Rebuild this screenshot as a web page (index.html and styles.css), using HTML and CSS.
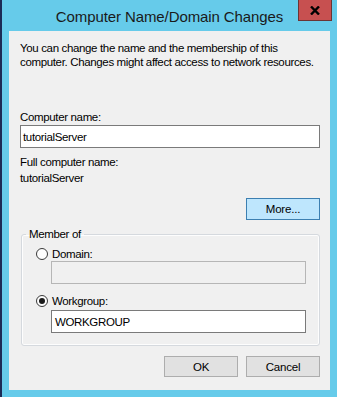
FILE: index.html
```html
<!DOCTYPE html>
<html lang="en">
<head>
<meta charset="utf-8">
<title>Computer Name/Domain Changes</title>
<link rel="stylesheet" href="styles.css">
</head>
<body>
<div class="screen">
  <div class="edge"></div>
  <div class="window">
    <div class="titlebar">
      <span class="title">Computer Name/Domain Changes</span>
      <div class="close">
        <svg width="10" height="9" viewBox="0 0 10 9"><path d="M1 0.5 L9 8.5 M9 0.5 L1 8.5" stroke="#000" stroke-width="2.4" fill="none"/></svg>
      </div>
    </div>
    <div class="client">
      <p class="intro">You can change the name and the membership of this<br>computer. Changes might affect access to network resources.</p>
      <div class="lbl name-lbl">Computer name:</div>
      <div class="textbox wide">tutorialServer</div>
      <div class="lbl full-lbl">Full computer name:</div>
      <div class="lbl full-val">tutorialServer</div>
      <div class="more-row"><div class="btn focus">More...</div></div>
      <fieldset class="group">
        <legend>Member of</legend>
        <div class="group-body">
          <div class="radio-row first"><span class="radio"></span><span>Domain:</span></div>
          <div class="textbox inner disabled"></div>
          <div class="radio-row second"><span class="radio checked"></span><span>Workgroup:</span></div>
          <div class="textbox inner wg">WORKGROUP</div>
        </div>
      </fieldset>
      <div class="actions">
        <div class="btn">OK</div>
        <div class="btn">Cancel</div>
      </div>
    </div>
  </div>
</div>
</body>
</html>
```
FILE: styles.css
```css
html, body {
  margin: 0;
  padding: 0;
}
body {
  width: 337px;
  height: 397px;
  overflow: hidden;
  font-family: "Liberation Sans", Arial, sans-serif;
  font-size: 12px;
  color: #000;
}
.screen {
  display: flex;
  width: 337px;
  height: 397px;
}
.edge {
  width: 2px;
  background: #1c2b55;
}
.window {
  flex: 1;
  display: flex;
  flex-direction: column;
  background: #66cbea;
  padding: 0 7px 7px 7px;
}
.titlebar {
  position: relative;
  height: 31px;
  display: flex;
  align-items: center;
  justify-content: center;
}
.title {
  font-size: 15px;
  color: #1a1a1a;
  margin-top: 1px;
  letter-spacing: -0.1px;
}
.close {
  position: absolute;
  top: 0;
  right: -2px;
  width: 32px;
  height: 20px;
  background: #c75050;
  border: 1px solid #6b3434;
  border-top: none;
  display: flex;
  align-items: center;
  justify-content: center;
}
.close svg {
  display: block;
  margin-top: 1px;
}
.client {
  flex: 1;
  background: #f0f0f0;
  display: flex;
  flex-direction: column;
  padding: 10px 10px 0 11px;
  font-size: 11.5px;
  letter-spacing: -0.35px;
  line-height: 14px;
}
.intro {
  margin: 0;
  color: #000;
  white-space: nowrap;
}
.lbl {
  line-height: 14px;
}
.name-lbl {
  margin-top: 41px;
}
.textbox {
  box-sizing: border-box;
  height: 23px;
  background: #fff;
  border: 1px solid #7a7a7a;
  padding: 0 3px;
  display: flex;
  align-items: center;
}
.textbox.wide {
  margin-top: 1px;
  width: 300px;
  padding-left: 2px;
}
.full-lbl {
  margin-top: 7px;
}
.full-val {
  margin-top: 2px;
}
.more-row {
  display: flex;
  justify-content: flex-end;
  margin-top: 13px;
}
.btn {
  box-sizing: border-box;
  width: 74px;
  height: 21px;
  background: #e1e1e1;
  border: 1px solid #adadad;
  display: flex;
  align-items: center;
  justify-content: center;
  letter-spacing: -0.2px;
}
.btn.focus {
  height: 22px;
  background: #bee6fd;
  border-color: #3c7fb1;
}
.group {
  margin: 7px 0 0 1px;
  padding: 0 0 12px 0;
  border: 1px solid #d5d9de;
  border-radius: 3px;
  box-shadow: inset 0 0 0 1px #fdfdfd;
  min-width: 0;
}
.group legend {
  padding: 0 3px;
  margin-left: 4px;
  line-height: 14px;
}
.group-body {
  display: flex;
  flex-direction: column;
  padding-left: 14px;
}
.radio-row {
  display: flex;
  align-items: center;
  height: 14px;
}
.radio-row.first {
  margin-top: 6px;
}
.radio-row.second {
  margin-top: 10px;
}
.radio {
  box-sizing: border-box;
  width: 12px;
  height: 12px;
  border-radius: 50%;
  border: 1px solid #3a3a3a;
  background: #fdfdfd;
  margin-right: 4px;
  display: flex;
  align-items: center;
  justify-content: center;
}
.radio.checked::after {
  content: "";
  width: 6px;
  height: 6px;
  border-radius: 50%;
  background: #1a1a1a;
}
.textbox.inner {
  width: 255px;
  margin-left: 15px;
}
.textbox.disabled {
  background: #f0f0f0;
  border-color: #b6b6b6;
}
.textbox.wg {
  margin-top: 2px;
  padding-left: 3px;
}
.actions {
  display: flex;
  justify-content: flex-end;
  gap: 8px;
  margin-top: 10px;
}
```
